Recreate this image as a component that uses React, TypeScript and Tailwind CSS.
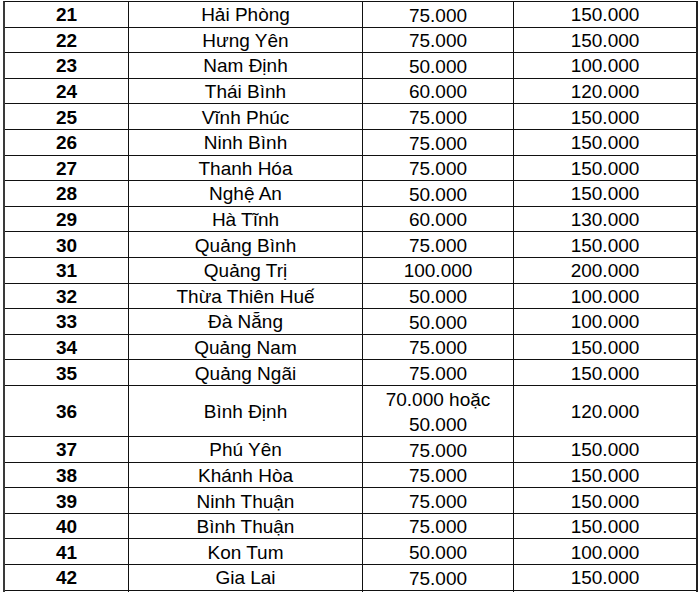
const rows: [string, string, string, string][] = [
  ['21', 'Hải Phòng', '75.000', '150.000'],
  ['22', 'Hưng Yên', '75.000', '150.000'],
  ['23', 'Nam Định', '50.000', '100.000'],
  ['24', 'Thái Bình', '60.000', '120.000'],
  ['25', 'Vĩnh Phúc', '75.000', '150.000'],
  ['26', 'Ninh Bình', '75.000', '150.000'],
  ['27', 'Thanh Hóa', '75.000', '150.000'],
  ['28', 'Nghệ An', '50.000', '150.000'],
  ['29', 'Hà Tĩnh', '60.000', '130.000'],
  ['30', 'Quảng Bình', '75.000', '150.000'],
  ['31', 'Quảng Trị', '100.000', '200.000'],
  ['32', 'Thừa Thiên Huế', '50.000', '100.000'],
  ['33', 'Đà Nẵng', '50.000', '100.000'],
  ['34', 'Quảng Nam', '75.000', '150.000'],
  ['35', 'Quảng Ngãi', '75.000', '150.000'],
  ['36', 'Bình Định', '70.000 hoặc\n50.000', '120.000'],
  ['37', 'Phú Yên', '75.000', '150.000'],
  ['38', 'Khánh Hòa', '75.000', '150.000'],
  ['39', 'Ninh Thuận', '75.000', '150.000'],
  ['40', 'Bình Thuận', '75.000', '150.000'],
  ['41', 'Kon Tum', '50.000', '100.000'],
  ['42', 'Gia Lai', '75.000', '150.000'],
  ['', '', '', ''],
];

function Row({ r }: { r: [string, string, string, string] }) {
  const tall = r[2].includes('\n');
  return (
    <div className={`flex border-b border-[#111] ${tall ? 'h-[51.2px]' : 'h-[25.6px]'}`}>
      <div className="w-[124px] flex items-center justify-center border-r border-[#111] pt-[2px] font-bold">{r[0]}</div>
      <div className="w-[234px] flex items-center justify-center border-r border-[#111] pt-[2px]">{r[1]}</div>
      <div className="w-[151px] flex flex-col items-center justify-center border-r border-[#111] pt-[2px] leading-[25.5px]">
        {r[2].split('\n').map((t, i) => (
          <span key={i}>{t}</span>
        ))}
      </div>
      <div className="flex-1 flex items-center justify-center pt-[2px]">{r[3]}</div>
    </div>
  );
}

export default function App() {
  return (
    <div className="h-[592px] w-[700px] overflow-hidden bg-white pl-[3px] pr-[2px] pt-[1px]">
      <div
        className="border-l-2 border-r-2 border-t border-l-[#3a3a3a] border-r-[#222] border-t-[#111] text-[19px] leading-[22px] text-black"
        style={{ fontFamily: '"Liberation Sans", Arial, sans-serif' }}
      >
        {rows.map((r, i) => (
          <Row key={i} r={r} />
        ))}
      </div>
    </div>
  );
}
